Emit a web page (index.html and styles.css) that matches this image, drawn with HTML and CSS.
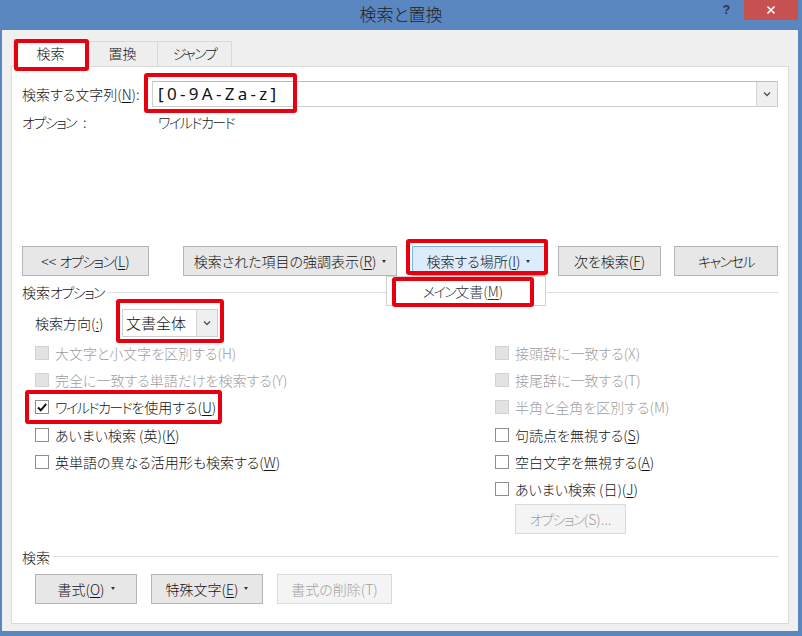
FILE: index.html
```html
<!DOCTYPE html>
<html lang="ja">

<head>
  <meta charset="UTF-8">
  <title>検索と置換</title>
  <link rel="stylesheet" href="styles.css">
</head>

<body>

  <div class="window">
    <div class="titlebar">
      <div></div>
      <div class="title">検索と置換</div>
      <div class="caption-btns">
        <span class="help">?</span>
        <span class="close">
          <svg width="10" height="10" viewBox="0 0 10 10"><path d="M1.5 1.5L8.5 8.5M8.5 1.5L1.5 8.5" stroke="#fff" stroke-width="1.6"/></svg>
        </span>
      </div>
    </div>

    <div class="client">
      <div class="tabs">
        <div class="tab active">検索</div>
        <div class="tab tab-replace">置換</div>
        <div class="tab tab-jump"><span class="kt">ジャンプ</span></div>
      </div>

      <div class="panel">
        <div class="find-row">
          <label class="field-label">検索する文字列(<u>N</u>):</label>
          <div class="combo">
            <span class="combo-value">[0-9A-Za-z]</span>
            <span class="combo-drop">
              <svg width="8" height="6" viewBox="0 0 8 6"><path d="M1 1.5L4 4.5L7 1.5" fill="none" stroke="#555" stroke-width="1.4"/></svg>
            </span>
          </div>
        </div>
        <div class="opt-row">
          <span class="opt-label"><span class="kt">オプション</span><span class="colon">:</span></span>
          <span class="kt">ワイルドカード</span>
        </div>

        <div class="btn-row">
          <button class="btn btn-less"><span>&lt;&lt; <span class="kt">オプション</span>(<u>L</u>)</span></button>
          <button class="btn btn-highlight"><span>検索された項目の強調表示(<u>R</u>)</span><i class="caret"></i></button>
          <div class="menu-wrap">
            <button class="btn btn-where hot"><span>検索する場所(<u>I</u>)</span><i class="caret"></i></button>
            <div class="menu"><span class="kt">メイン</span>文書(<u>M</u>)</div>
          </div>
          <button class="btn btn-next"><span>次を検索(<u>F</u>)</span></button>
          <button class="btn btn-cancel"><span class="kt">キャンセル</span></button>
        </div>

        <div class="group-head">
          <span>検索<span class="kt">オプション</span></span>
          <span class="group-line"></span>
        </div>

        <div class="dir-row">
          <span class="dir-label">検索方向(<u>:</u>)</span>
          <div class="select">
            <span class="select-value">文書全体</span>
            <span class="combo-drop">
              <svg width="8" height="6" viewBox="0 0 8 6"><path d="M1 1.5L4 4.5L7 1.5" fill="none" stroke="#555" stroke-width="1.4"/></svg>
            </span>
          </div>
        </div>

        <div class="check-grid">
          <div class="check-col">
            <div class="check disabled"><span class="box"></span><span>大文字と小文字を区別する(H)</span></div>
            <div class="check disabled"><span class="box"></span><span>完全に一致する単語だけを検索する(Y)</span></div>
            <div class="check">
              <span class="box">
                <svg width="12" height="12" viewBox="0 0 12 12"><path d="M2 6.5L4.8 9.3L10.2 2.8" fill="none" stroke="#111" stroke-width="2"/></svg>
              </span><span><span class="kt">ワイルドカード</span>を使用する(<u>U</u>)</span>
            </div>
            <div class="check"><span class="box"></span><span>あいまい検索 (英)(<u>K</u>)</span></div>
            <div class="check"><span class="box"></span><span>英単語の異なる活用形も検索する(<u>W</u>)</span></div>
          </div>
          <div class="check-col">
            <div class="check disabled"><span class="box"></span><span>接頭辞に一致する(X)</span></div>
            <div class="check disabled"><span class="box"></span><span>接尾辞に一致する(T)</span></div>
            <div class="check disabled"><span class="box"></span><span>半角と全角を区別する(M)</span></div>
            <div class="check"><span class="box"></span><span>句読点を無視する(<u>S</u>)</span></div>
            <div class="check"><span class="box"></span><span>空白文字を無視する(<u>A</u>)</span></div>
            <div class="check"><span class="box"></span><span>あいまい検索 (日)(<u>J</u>)</span></div>
            <button class="btn btn-fuzzy disabled"><span><span class="kt">オプション</span>(S)...</span></button>
          </div>
        </div>

        <div class="group-head group-find">
          <span>検索</span>
          <span class="group-line"></span>
        </div>

        <div class="format-row">
          <button class="btn btn-format"><span>書式(<u>O</u>)</span><i class="caret"></i></button>
          <button class="btn btn-special"><span>特殊文字(<u>E</u>)</span><i class="caret"></i></button>
          <button class="btn btn-clear disabled"><span>書式の削除(T)</span></button>
        </div>
      </div>
    </div>

    <!-- red annotation frames -->
    <div class="mark mark-tab"></div>
    <div class="mark mark-text"></div>
    <div class="mark mark-where"></div>
    <div class="mark mark-menu"></div>
    <div class="mark mark-dir"></div>
    <div class="mark mark-wild"></div>
  </div>

</body>

</html>
```

FILE: styles.css
```css
* {
  margin: 0;
  padding: 0;
  box-sizing: border-box;
}

body {
  font-family: "Noto Sans CJK JP", "Noto Sans", sans-serif;
  font-size: 14px;
  font-weight: 300;
  line-height: 18px;
  color: #141414;
  font-feature-settings: "palt";
  background-color: #5b87c0;
}

u {
  text-decoration: underline;
  text-underline-offset: 2px;
}

/* katakana runs are narrower in the dialog font */
.kt {
  letter-spacing: -1.5px;
}

.window {
  position: relative;
  width: 802px;
  height: 636px;
  background-color: #5b87c0;
  display: flex;
  flex-direction: column;
}

/* title bar */

.titlebar {
  height: 30px;
  display: grid;
  grid-template-columns: 1fr auto 1fr;
  align-items: start;
}

.title {
  font-size: 17px;
  line-height: 28px;
  color: #1f1f1f;
}

.caption-btns {
  justify-self: end;
  display: flex;
  margin-right: 4px;
}

.help {
  font-family: "Liberation Sans", sans-serif;
  font-weight: bold;
  font-size: 12px;
  line-height: 20px;
  color: #22354f;
  margin-right: 14px;
}

.close {
  width: 54px;
  height: 20px;
  background-color: #c75050;
  display: flex;
  align-items: center;
  justify-content: center;
}

/* client area */

.client {
  flex: 1;
  margin: 0 4px 5px 2px;
  background-color: #f0f0f0;
  display: flex;
  flex-direction: column;
  padding: 9px 9px 7px 9px;
}

.tabs {
  height: 27px;
  display: flex;
  align-items: flex-end;
  padding-left: 2px;
}

.tab {
  height: 25px;
  border: 1px solid #d9d9d9;
  border-bottom: none;
  background-color: #eeeeee;
  text-align: center;
  line-height: 23px;
}

.tab.active {
  position: relative;
  z-index: 1;
  width: 75px;
  height: 28px;
  margin-bottom: -1px;
  background-color: #fff;
  line-height: 26px;
}

.tab-replace {
  width: 70px;
  border-left: none;
}

.tab-jump {
  width: 74px;
  border-left: none;
}

.panel {
  flex: 1;
  background-color: #fff;
  border: 1px solid #d9d9d9;
  padding: 14px 10px 0 10px;
}

.find-row {
  display: flex;
  align-items: center;
  height: 26px;
}

.field-label {
  width: 130px;
}

.combo {
  flex: 1;
  height: 26px;
  border: 1px solid #cfcfcf;
  border-top-color: #bdbdbd;
  display: flex;
  align-items: center;
}

.combo-value {
  flex: 1;
  padding-left: 5px;
  font-family: "Noto Sans", sans-serif;
  font-weight: 400;
  font-size: 17px;
  letter-spacing: 3.3px;
  color: #111;
}

.combo-drop {
  width: 21px;
  align-self: stretch;
  background-color: #efefef;
  border-left: 1px solid #d6d6d6;
  display: flex;
  align-items: center;
  justify-content: center;
}

.opt-row {
  margin-top: 6px;
  display: flex;
}

.opt-label {
  width: 136px;
}

.colon {
  margin-left: 7px;
}

/* buttons */

.btn {
  height: 30px;
  font: inherit;
  color: #141414;
  background-color: #e7e7e7;
  border: 1px solid #b4b4b4;
  display: flex;
  align-items: center;
  justify-content: center;
}

.btn.hot {
  background-color: #dcecfc;
  border-color: #7eb4ea;
}

.btn.disabled {
  background-color: #f4f4f4;
  border-color: #dadada;
  color: #a0a0a0;
}

.caret {
  display: inline-block;
  width: 0;
  height: 0;
  margin-left: 6px;
  border-left: 2.5px solid transparent;
  border-right: 2.5px solid transparent;
  border-top: 3px solid #333;
}

.btn-row {
  margin-top: 115px;
  display: flex;
}

.btn-less {
  width: 127px;
}

.btn-highlight {
  width: 214px;
  margin-left: 34px;
}

.menu-wrap {
  position: relative;
  margin-left: 15px;
}

.btn-where {
  width: 133px;
}

.menu {
  position: absolute;
  top: 30px;
  left: -26px;
  width: 160px;
  height: 30px;
  background-color: #fff;
  border: 1px solid #d2d2d2;
  color: #333;
  text-align: center;
  line-height: 28px;
  padding-right: 6px;
  z-index: 2;
}

.btn-next {
  width: 103px;
  margin-left: 13px;
}

.btn-cancel {
  width: 104px;
  margin-left: 13px;
}

/* groups */

.group-head {
  margin-top: 7px;
  display: flex;
  align-items: center;
}

.group-line {
  flex: 1;
  height: 1px;
  margin-left: 3px;
  background-color: #dedede;
}

.dir-row {
  margin-top: 8px;
  height: 28px;
  padding-left: 13px;
  display: flex;
  align-items: center;
}

.dir-label {
  width: 87px;
}

.select {
  width: 96px;
  height: 28px;
  border: 1px solid #cfcfcf;
  display: flex;
  align-items: center;
}

.select-value {
  flex: 1;
  padding-left: 3px;
  font-size: 15px;
}

.check-grid {
  margin-top: 2px;
  padding-left: 13px;
  display: grid;
  grid-template-columns: 460px 1fr;
}

.check {
  height: 27.3px;
  display: flex;
  align-items: center;
}

.box {
  width: 14px;
  height: 14px;
  margin-right: 6px;
  border: 1px solid #8e8e8e;
  background-color: #fff;
  display: flex;
  align-items: center;
  justify-content: center;
}

.check.disabled {
  color: #9d9d9d;
}

.check.disabled .box {
  background-color: #e3e3e3;
  border-color: #d2d2d2;
}

.btn-fuzzy {
  width: 111px;
  margin: 1px 0 0 20px;
}

.group-find {
  margin-top: 14px;
}

.format-row {
  margin-top: 8px;
  padding-left: 13px;
  display: flex;
  gap: 14px;
}

.btn-format {
  width: 102px;
}

.btn-special {
  width: 112px;
}

.btn-clear {
  width: 115px;
}

/* red annotation frames */

.mark {
  position: absolute;
  border: 4px solid #e8000e;
  border-radius: 3px;
  z-index: 5;
}

.mark-tab {
  left: 14px;
  top: 39px;
  width: 75px;
  height: 32px;
}

.mark-text {
  left: 144px;
  top: 73px;
  width: 153px;
  height: 40px;
}

.mark-where {
  left: 406px;
  top: 239px;
  width: 142px;
  height: 36px;
}

.mark-menu {
  left: 392px;
  top: 277px;
  width: 142px;
  height: 30px;
}

.mark-dir {
  left: 116px;
  top: 299px;
  width: 108px;
  height: 44px;
}

.mark-wild {
  left: 25px;
  top: 390px;
  width: 197px;
  height: 34px;
}
```
